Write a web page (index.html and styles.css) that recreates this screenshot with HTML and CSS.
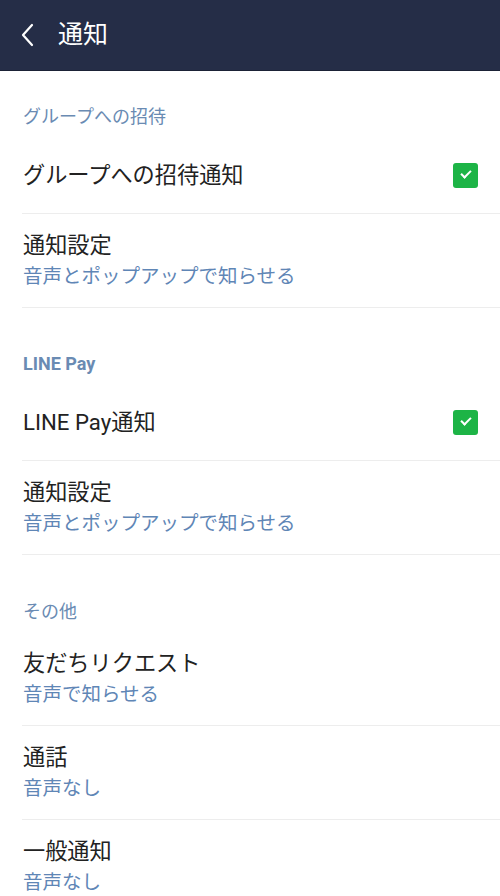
FILE: index.html
```html
<!DOCTYPE html>
<html lang="ja">
<head>
  <meta charset="UTF-8">
  <meta name="viewport" content="width=device-width, initial-scale=1.0">
  <title>通知</title>
  <link rel="stylesheet" href="styles.css">
</head>
<body>

  <!-- Top bar -->
  <div class="top-bar">
    <svg class="back-icon" width="18" height="26" viewBox="0 0 18 26">
      <polyline points="13,3 4,13 13,23" fill="none" stroke="#ffffff" stroke-width="2.2" stroke-linecap="round" stroke-linejoin="round"/>
    </svg>
    <div class="top-title">通知</div>
  </div>

  <!-- Group invites -->
  <div class="section">
    <div class="section-label">グループへの招待</div>
    <div class="row">
      <div class="row-title">グループへの招待通知</div>
      <span class="check"></span>
    </div>
    <div class="row two-line">
      <div class="row-title">通知設定</div>
      <div class="row-sub">音声とポップアップで知らせる</div>
    </div>
  </div>

  <!-- LINE Pay -->
  <div class="section">
    <div class="section-label latin">LINE Pay</div>
    <div class="row">
      <div class="row-title">LINE Pay通知</div>
      <span class="check"></span>
    </div>
    <div class="row two-line">
      <div class="row-title">通知設定</div>
      <div class="row-sub">音声とポップアップで知らせる</div>
    </div>
  </div>

  <!-- Other -->
  <div class="section">
    <div class="section-label">その他</div>
    <div class="row two-line">
      <div class="row-title">友だちリクエスト</div>
      <div class="row-sub">音声で知らせる</div>
    </div>
    <div class="row two-line">
      <div class="row-title">通話</div>
      <div class="row-sub">音声なし</div>
    </div>
    <div class="row two-line">
      <div class="row-title">一般通知</div>
      <div class="row-sub">音声なし</div>
    </div>
  </div>

</body>
</html>
```

FILE: styles.css
```css
body {
  margin: 0;
  padding: 0;
  background: #ffffff;
  font-family: Roboto, "Noto Sans CJK JP", sans-serif;
  color: #222222;
  overflow: hidden;
}

/* Header bar */
.top-bar {
  height: 71px;
  background-color: #252d47;
  display: flex;
  align-items: center;
  padding-left: 19px;
  box-sizing: border-box;
  border-bottom: 1px solid #1b2236;
}

.back-icon {
  display: block;
  margin-right: 21px;
}

.top-title {
  color: #ffffff;
  font-size: 25px;
  line-height: 30px;
}

/* Sections */
.section + .section {
  margin-top: 10px;
}

.section:last-child {
  margin-top: 11px;
}

.section-label {
  padding: 35px 23px 9px;
  font-size: 18px;
  line-height: 22px;
  color: #6a8bb3;
}

.section-label.latin {
  font-weight: bold;
}

/* Rows */
.row {
  height: 77px;
  margin-left: 22px;
  padding-right: 22px;
  border-bottom: 1px solid #ededed;
  box-sizing: border-box;
  display: flex;
  align-items: center;
  justify-content: space-between;
}

.row-title {
  font-size: 22.2px;
  line-height: 30px;
  margin-left: 1px;
}

.row.two-line {
  height: 94px;
  display: block;
  padding-top: 16px;
}

.row-sub {
  font-size: 19.5px;
  line-height: 33px;
  color: #5f86b6;
  margin-left: 1px;
}

/* Green checked box */
.check {
  width: 25px;
  height: 25px;
  border-radius: 3px;
  background-color: #1db446;
  position: relative;
  flex-shrink: 0;
}

.check::after {
  content: '';
  position: absolute;
  left: 8px;
  top: 7px;
  width: 8px;
  height: 4px;
  border-left: 2px solid #ffffff;
  border-bottom: 2px solid #ffffff;
  transform: rotate(-45deg);
}
```
